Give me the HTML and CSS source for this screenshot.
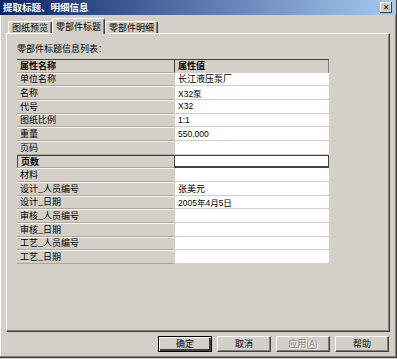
FILE: index.html
```html
<!DOCTYPE html>
<html lang="zh-CN">
<head>
  <meta charset="UTF-8" />
  <title>提取标题、明细信息</title>
  <link rel="stylesheet" href="styles.css">
</head>
<body>

<div class="window">
  <div class="titlebar">
    <span class="title">提取标题、明细信息</span>
    <span class="close">✕</span>
  </div>

  <div class="tabs">
    <div class="tab">图纸预览</div>
    <div class="tab active">零部件标题</div>
    <div class="tab">零部件明细</div>
  </div>

  <div class="panel">
    <div class="caption">零部件标题信息列表：</div>
    <div class="grid">
      <div class="key head">属性名称</div><div class="val head">属性值</div>
      <div class="key">单位名称</div><div class="val">长江液压泵厂</div>
      <div class="key">名称</div><div class="val latin">X32泵</div>
      <div class="key">代号</div><div class="val latin">X32</div>
      <div class="key">图纸比例</div><div class="val latin">1:1</div>
      <div class="key">重量</div><div class="val latin">550.000</div>
      <div class="key">页码</div><div class="val"></div>
      <div class="key cur">页数</div><div class="val cur"></div>
      <div class="key">材料</div><div class="val"></div>
      <div class="key">设计_人员编号</div><div class="val">张美元</div>
      <div class="key">设计_日期</div><div class="val latin">2005年4月5日</div>
      <div class="key">审核_人员编号</div><div class="val"></div>
      <div class="key">审核_日期</div><div class="val"></div>
      <div class="key">工艺_人员编号</div><div class="val"></div>
      <div class="key">工艺_日期</div><div class="val"></div>
    </div>
  </div>

  <div class="buttons">
    <div class="btn default">确定</div>
    <div class="btn">取消</div>
    <div class="btn disabled">应用(<u>A</u>)</div>
    <div class="btn">帮助</div>
  </div>
</div>

</body>
</html>
```

FILE: styles.css
```css
body { margin: 0; background: #d4d0c8; font-family: "Noto Sans CJK SC", "Liberation Sans", sans-serif; font-size: 9px; color: #000; }
.window { width: 396px; height: 357px; background: #d4d0c8; border-right: 1px solid #404040; border-bottom: 1px solid #404040;
          box-shadow: inset -1px -1px #808080, inset 1px 0 #fff; overflow: hidden; }
.titlebar { height: 15px; background: linear-gradient(to right, #0a246a, #a6caf0); display: flex; align-items: center; justify-content: space-between; padding: 0 4px 0 3px; }
.title { color: #fff; font-weight: bold; font-size: 9.5px; line-height: 15px; }
.close { width: 12px; height: 11px; background: #d4d0c8; box-shadow: inset -1px -1px #404040, inset 1px 1px #fff; font-size: 8px; font-weight: bold; line-height: 11px; text-align: center; font-family: "DejaVu Sans", sans-serif; }

.tabs { display: flex; align-items: flex-end; height: 18px; padding-left: 8px; }
.tab { height: 11px; line-height: 12px; padding: 0 3px; background: #d4d0c8; border-top: 1px solid #fff; border-left: 1px solid #fff; border-right: 1px solid #404040;
       box-shadow: inset -1px 0 #808080; border-radius: 2px 2px 0 0; }
.tab.active { height: 15px; line-height: 15px; margin-bottom: -1px; position: relative; z-index: 1; padding: 0 3px; }

.panel { margin-left: 6px; width: 382px; height: 297px; border-top: 1px solid #fff; border-left: 1px solid #fff; border-right: 1px solid #404040; border-bottom: 1px solid #404040;
         box-shadow: inset -1px -1px #808080; }
.caption { margin: 9px 0 0 10px; line-height: 12px; }
.grid { display: grid; grid-template-columns: 157px 155px; grid-auto-rows: 13.67px; margin: 4px 0 0 10px; }
.key, .val { box-sizing: border-box; padding-left: 3px; display: flex; align-items: center; white-space: nowrap; }
.key { background: #d4d0c8; border-bottom: 1px solid #aca89f; box-shadow: inset 0 1px #f6f5f2; }
.val { background: #fff; border-bottom: 1px solid #d4d0c8; border-left: 1px solid #d4d0c8; }
.latin { font-family: "Liberation Sans", "Noto Sans CJK SC", sans-serif; font-size: 8.5px; }
.head { font-weight: bold; border-top: 1px solid #404040; box-shadow: none; background: #d4d0c8; }
.val.head { border-left: 1px solid #404040; border-right: 1px solid #808080; }
.key.cur { font-weight: bold; border-top: 1px solid #404040; border-left: 1px solid #404040; box-shadow: none; }
.val.cur { border: 1px solid #404040; border-bottom-width: 2px; }

.buttons { display: flex; justify-content: flex-end; gap: 5px; padding: 4px 7px 0 0; }
.btn { box-sizing: border-box; width: 54px; height: 16px; line-height: 14px; text-align: center; background: #d4d0c8;
       border-top: 1px solid #fff; border-left: 1px solid #fff; border-right: 1px solid #404040; border-bottom: 1px solid #404040; box-shadow: inset -1px -1px #808080; }
.btn.default { border: 1px solid #000; box-shadow: inset 1px 1px #fff, inset -2px -2px #404040, inset -1px -1px #808080; }
.btn.disabled { color: #808080; text-shadow: 1px 1px #fff; }
.btn u { text-decoration: underline; }
```
